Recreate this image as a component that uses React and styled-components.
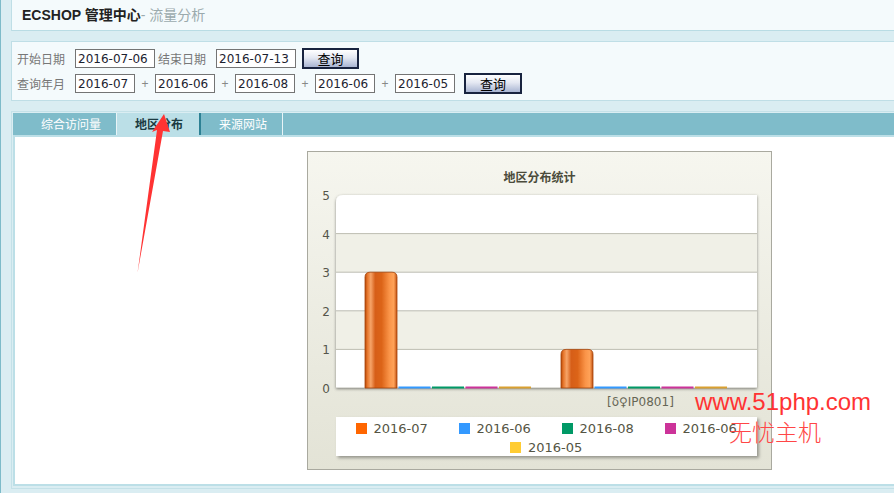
import React from 'react';
import styled, { createGlobalStyle } from 'styled-components';

const GlobalStyle = createGlobalStyle`
  html, body {
    margin: 0;
    padding: 0;
    background: #daedf2;
    font-family: 'Liberation Sans', 'Noto Sans CJK SC', sans-serif;
  }
`;

const Page = styled.div`
  position: relative;
  box-sizing: border-box;
  width: 100vw;
  height: 100vh;
  overflow: hidden;
  border-left: 1px solid #7dbbc9;
  padding-left: 10px;
`;

const Header = styled.div`
  height: 30px;
  line-height: 30px;
  background: #f4fafc;
  border-left: 1px solid #bfdee6;
  border-bottom: 1px solid #b9dce4;
  padding-left: 10px;
  font-size: 14px;
`;

const Brand = styled.span`
  font-weight: bold;
  color: #222;
`;

const Sub = styled.span`
  color: #9baaad;
`;

const FormBox = styled.div`
  margin-top: 10px;
  background: #f4fafc;
  border: 1px solid #bfdee6;
  border-right: none;
  padding: 6px 0 6px 5px;
  display: flex;
  flex-direction: column;
  gap: 4px;
`;

const FormRow = styled.div`
  display: flex;
  align-items: center;
  height: 21px;
`;

const Label = styled.span`
  font-family: 'Noto Sans CJK SC', sans-serif;
  font-size: 12px;
  color: #777;
  margin-left: ${(p) => p.$ml || 0}px;
  margin-right: 10px;
`;

const Input = styled.input`
  box-sizing: border-box;
  width: ${(p) => p.$w}px;
  height: 19px;
  border: 1px solid #747474;
  padding: 0 2px;
  font-family: 'DejaVu Sans', sans-serif;
  font-size: 12px;
  color: #1c2230;
  background: #fff;
  outline: none;
`;

const Plus = styled.span`
  width: 20px;
  text-align: center;
  font-size: 12px;
  color: #888;
`;

const Button = styled.button`
  box-sizing: border-box;
  width: ${(p) => p.$w}px;
  height: 21px;
  margin-left: ${(p) => p.$ml}px;
  border: 2px solid #18233f;
  background: linear-gradient(#ffffff, #e4e8f2 45%, #a9b5d2);
  font-family: 'Noto Sans CJK SC', sans-serif;
  font-size: 13px;
  line-height: 15px;
  color: #000;
  padding: 0;
`;

const TabPanel = styled.div`
  margin-top: 10px;
  border: 1px solid #c4e1e8;
  border-right: none;
  padding: 1px 0 2px 1px;
`;

const TabBar = styled.div`
  display: flex;
  height: 22px;
  background: #7fbcca;
`;

const Tab = styled.div`
  font-family: 'Noto Sans CJK SC', sans-serif;
  font-size: 12px;
  line-height: 22px;
  padding: 0 ${(p) => p.$pr}px 0 ${(p) => p.$pl}px;
  color: ${(p) => (p.$active ? '#1c3b42' : '#fff')};
  font-weight: ${(p) => (p.$active ? 'bold' : 'normal')};
  background: ${(p) => (p.$active ? '#bbdfe7' : 'transparent')};
  border-right: ${(p) => (p.$active ? '2px solid #2d8194' : '1px solid #e8f4f7')};
`;

const TabContent = styled.div`
  box-sizing: border-box;
  height: 351px;
  background: #fff;
  border: 2px solid #bcdfe7;
  border-right: none;
  padding: 14px 0 0 292px;
`;

const ChartBox = styled.div`
  box-sizing: border-box;
  width: 465px;
  height: 319px;
  border: 1px solid #a9a99f;
  background: linear-gradient(#f6f6ef, #e3e3d6);
`;

const ChartTitle = styled.div`
  padding-top: 17px;
  height: 16px;
  line-height: 16px;
  text-align: center;
  font-family: 'Noto Sans CJK SC', sans-serif;
  font-size: 12px;
  font-weight: bold;
  color: #4b4b3b;
`;

const Plot = styled.svg`
  display: block;
`;

const Legend = styled.div`
  box-sizing: border-box;
  margin: 4px 0 0 28px;
  width: 421px;
  height: 39px;
  padding-top: 2px;
  background: #fff;
  box-shadow: 2px 2px 3px rgba(0, 0, 0, 0.35);
  display: flex;
  flex-wrap: wrap;
  justify-content: center;
`;

const LegendItem = styled.div`
  box-sizing: border-box;
  width: 103px;
  height: 19px;
  padding-left: 15px;
  display: flex;
  align-items: center;
  font-family: 'DejaVu Sans', sans-serif;
  font-size: 13px;
  color: #555544;
`;

const Swatch = styled.span`
  width: 11px;
  height: 11px;
  margin-right: 7px;
  background: ${(p) => p.$c};
`;

const Arrow = styled.svg`
  position: absolute;
  left: 130px;
  top: 110px;
  pointer-events: none;
`;

const Watermark = styled.div`
  position: absolute;
  left: 694px;
  top: 387px;
  color: #ff3333;
  pointer-events: none;
`;

const WmUrl = styled.div`
  font-family: 'Liberation Sans', sans-serif;
  font-size: 24px;
  line-height: 30px;
`;

const WmName = styled.div`
  margin-left: 34px;
  font-family: 'Noto Sans CJK SC', sans-serif;
  font-size: 23px;
  font-weight: 300;
  line-height: 28px;
  color: #ff4646;
`;

const series = [
  { name: '2016-07', color: '#ff6600', line: '#ff6600' },
  { name: '2016-06', color: '#3399ff', line: '#3399ff' },
  { name: '2016-08', color: '#009966', line: '#009966' },
  { name: '2016-06', color: '#cc3399', line: '#cc3399' },
  { name: '2016-05', color: '#ffcc33', line: '#d9a030' },
];

const groups = [
  { x: 58, values: [3, 0, 0, 0, 0] },
  { x: 254, values: [1, 0, 0, 0, 0] },
];

const top = 44;
const bottom = 237;
const step = (bottom - top) / 5;
const barW = 32;
const slot = 33.5;

const barPath = (x, y) => {
  const x2 = x + barW;
  return `M${x},${bottom} V${y + 5} Q${x},${y} ${x + 5},${y} H${x2 - 5} Q${x2},${y} ${x2},${y + 5} V${bottom} Z`;
};

const Chart = () => (
  <Plot width="463" height="228" viewBox="1 34 463 228">
    <defs>
      <linearGradient id="bar" x1="0" x2="1" y1="0" y2="0">
        <stop offset="0" stopColor="#b84a08" />
        <stop offset="0.08" stopColor="#e8782e" />
        <stop offset="0.18" stopColor="#f6a468" />
        <stop offset="0.32" stopColor="#d65e18" />
        <stop offset="0.52" stopColor="#dc6418" />
        <stop offset="0.76" stopColor="#fa9448" />
        <stop offset="0.9" stopColor="#ffa258" />
        <stop offset="1" stopColor="#c05010" />
      </linearGradient>
      <clipPath id="plotClip">
        <path d={`M29,${bottom} V${top + 7} Q29,${top} 36,${top} H450 V${bottom} Z`} />
      </clipPath>
      <filter id="shadow" x="-5%" y="-5%" width="110%" height="110%">
        <feDropShadow dx="0" dy="1" stdDeviation="1.6" floodColor="#000" floodOpacity="0.45" />
      </filter>
    </defs>
    <path
      d={`M29,${bottom} V${top + 7} Q29,${top} 36,${top} H450 V${bottom} Z`}
      fill="#fff"
      filter="url(#shadow)"
    />
    <g clipPath="url(#plotClip)">
      {[1, 3].map((i) => (
        <rect key={i} x="29" y={top + step * i} width="421" height={step} fill="#f0f0e7" />
      ))}
      {[1, 2, 3, 4, 5].map((i) => (
        <line key={i} x1="29" x2="450" y1={top + step * i} y2={top + step * i} stroke="#bdbdb2" strokeWidth="1" />
      ))}
    </g>
    {[5, 4, 3, 2, 1, 0].map((v, i) => (
      <text
        key={v}
        x="23"
        y={top + step * i + 5}
        textAnchor="end"
        fontFamily="DejaVu Sans, sans-serif"
        fontSize="12"
        fill="#55554a"
      >
        {v}
      </text>
    ))}
    {groups.map((g) =>
      g.values.map((v, si) => {
        const x = g.x + si * slot;
        if (v > 0) {
          return (
            <path
              key={`${g.x}-${si}`}
              d={barPath(x, bottom - v * step)}
              fill="url(#bar)"
              stroke="#a54208"
              strokeWidth="0.8"
            />
          );
        }
        return <rect key={`${g.x}-${si}`} x={x} y={bottom - 1.5} width={barW} height="2" fill={series[si].line} />;
      })
    )}
    <text x="300" y="255" fontFamily="DejaVu Sans, sans-serif" fontSize="12" fill="#666655">
      [δ♀IP0801]
    </text>
  </Plot>
);

const App = () => (
  <>
    <GlobalStyle />
    <Page>
      <Header>
        <Brand>ECSHOP 管理中心</Brand>
        <Sub>- 流量分析</Sub>
      </Header>

      <FormBox>
        <FormRow>
          <Label>开始日期</Label>
          <Input $w={80} defaultValue="2016-07-06" />
          <Label $ml={3}>结束日期</Label>
          <Input $w={80} defaultValue="2016-07-13" />
          <Button $w={57} $ml={6}>查询</Button>
        </FormRow>
        <FormRow>
          <Label>查询年月</Label>
          <Input $w={60} defaultValue="2016-07" />
          <Plus>+</Plus>
          <Input $w={60} defaultValue="2016-06" />
          <Plus>+</Plus>
          <Input $w={60} defaultValue="2016-08" />
          <Plus>+</Plus>
          <Input $w={60} defaultValue="2016-06" />
          <Plus>+</Plus>
          <Input $w={60} defaultValue="2016-05" />
          <Button $w={58} $ml={9}>查询</Button>
        </FormRow>
      </FormBox>

      <TabPanel>
        <TabBar>
          <Tab $pl={28} $pr={15}>综合访问量</Tab>
          <Tab $pl={18} $pr={16} $active>地区分布</Tab>
          <Tab $pl={18} $pr={15}>来源网站</Tab>
        </TabBar>
        <TabContent>
          <ChartBox>
            <ChartTitle>地区分布统计</ChartTitle>
            <Chart />
            <Legend>
              {series.map((s, i) => (
                <LegendItem key={i}>
                  <Swatch $c={s.color} />
                  {s.name}
                </LegendItem>
              ))}
            </Legend>
          </ChartBox>
        </TabContent>
      </TabPanel>

      <Arrow width="45" height="170" viewBox="0 0 45 170">
        <polygon points="6.5,163 26,20 21,22 33,4 39,22 32,21" fill="#ff3333" />
      </Arrow>

      <Watermark>
        <WmUrl>www.51php.com</WmUrl>
        <WmName>无忧主机</WmName>
      </Watermark>
    </Page>
  </>
);

export default App;
